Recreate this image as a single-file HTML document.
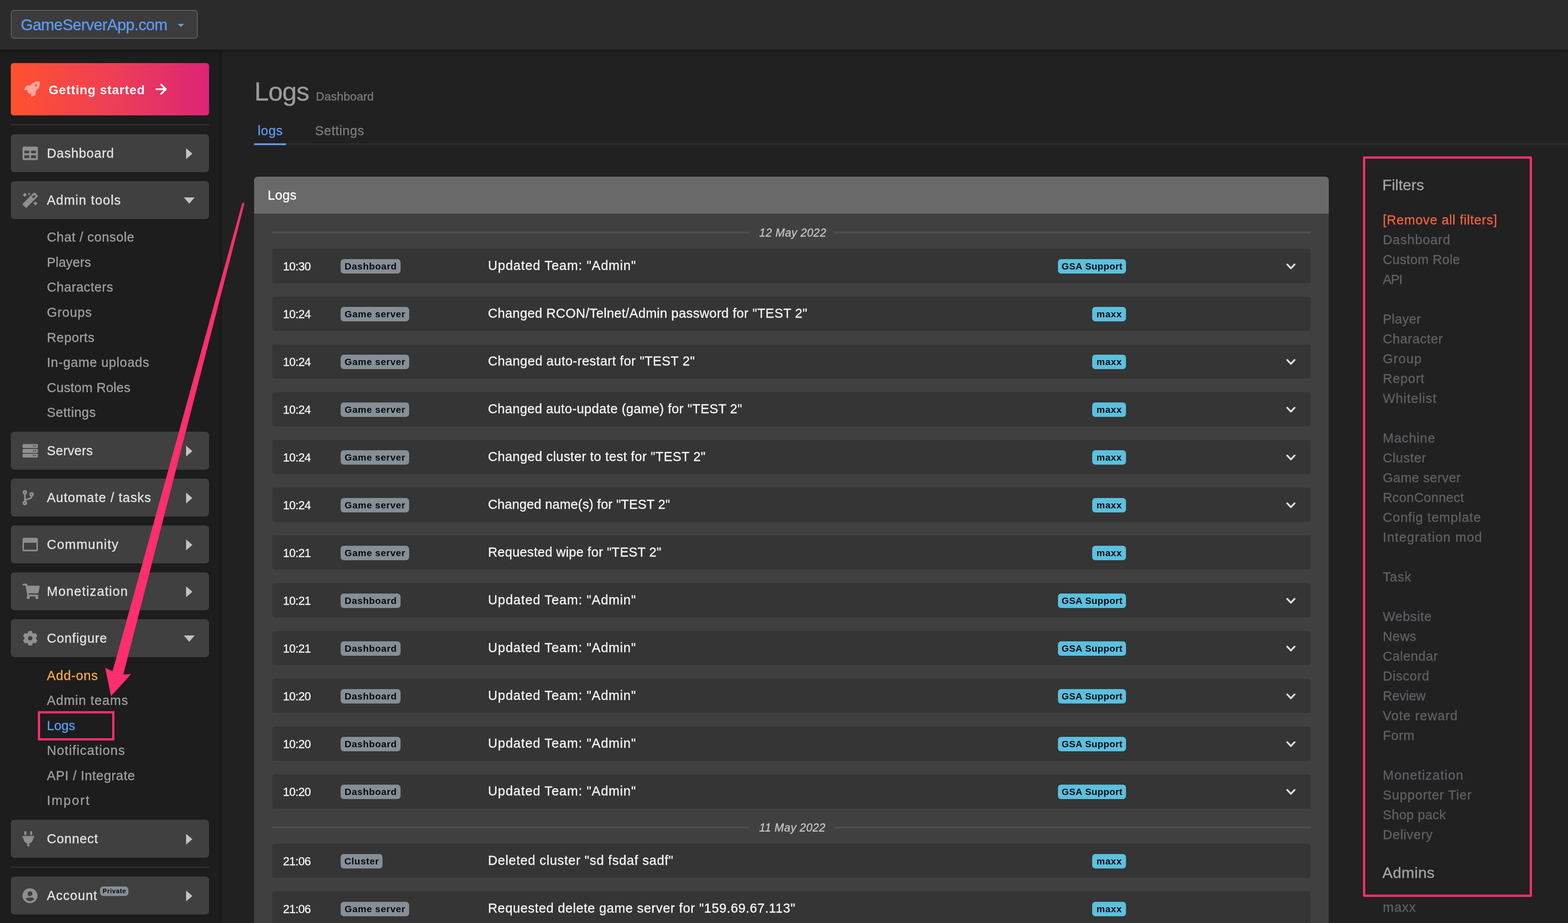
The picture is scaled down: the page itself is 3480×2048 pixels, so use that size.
<!DOCTYPE html><html lang="en"><head><meta charset="utf-8"><title>Logs - Dashboard</title><style>
*{box-sizing:border-box;margin:0;padding:0}
html,body{width:3480px;height:2048px;overflow:hidden;background:#212121}
body{font-family:"Liberation Sans",sans-serif;position:relative;color:#e0e0e0;-webkit-text-stroke:.4px}
.bd,.nostroke{-webkit-text-stroke:0}
#app{position:absolute;left:0;top:0;width:3480px;height:2048px;will-change:transform}
.abs{position:absolute}
.t{position:absolute;white-space:pre;line-height:1}
#topbar{left:0;top:0;width:3480px;height:110px;background:#2b2b2b;box-shadow:0 2px 8px rgba(0,0,0,.45);z-index:3}
#site{left:24px;top:22px;width:415px;height:64px;border:2px solid #5e5e5e;border-radius:8px;background:#3c3c3c}
#sidebar{left:0;top:110px;width:493px;height:1938px;background:#1d1d1d;z-index:1;box-shadow:inset -5px 0 5px -3px rgba(0,0,0,.2)}
#gs{left:24px;top:140px;width:440px;height:116px;border-radius:6px;background:linear-gradient(90deg,#ff512f 0%,#ef3f55 50%,#dd2476 100%);z-index:2}
.sep{position:absolute;left:24px;width:440px;height:2px;background:#383838;z-index:2}
.nb{position:absolute;left:24px;width:440px;height:84px;border-radius:8px;background:#404040;z-index:2}
.nb .t{left:80px;top:28px;font-size:29px;color:#e2e2e2}
.nb svg{position:absolute}
.sub{position:absolute;left:104px;font-size:29px;line-height:1;white-space:pre;color:#9f9f9f;z-index:2}
#panelh{left:564px;top:392px;width:2385px;height:82px;background:#696969;border-radius:8px 8px 0 0}
#panelb{left:564px;top:474px;width:2385px;height:1574px;background:#404040}
.row{position:absolute;left:604px;width:2305px;height:76px;border-radius:6px;background:#353535}
.row .tm{position:absolute;left:24px;top:26px;font-size:26px;letter-spacing:-.7px;line-height:1;color:#f2f2f2;white-space:pre}
.bd{position:absolute;top:23px;height:32px;border-radius:7px;font-weight:700;font-size:21px;line-height:32px;color:#06090c;letter-spacing:.7px;text-indent:.7px;text-align:center;white-space:pre}
.bd.g{left:152px;background:#868e96}
.bd.b{background:#5bc0de}
.row .msg{position:absolute;left:479px;top:23px;font-size:29px;line-height:1;color:#f4f4f4;white-space:pre}
.row svg{position:absolute;left:2249px;top:32px}
.dl{position:absolute;height:4px;background:#4f4f4f}
.dt{position:absolute;font-style:italic;font-size:25px;line-height:1;color:#c4c4c4;white-space:pre;letter-spacing:.4px}
.f{position:absolute;left:3069px;font-size:29px;line-height:1;white-space:pre;color:#5d6166}
</style></head><body><div id="app"><div id="topbar" class="abs"><div id="site" class="abs"><span class="t" style="left:20px;top:12.5px;font-size:35px;letter-spacing:-0.66px;color:#5c9cf6">GameServerApp.com</span><svg class="abs" style="left:368px;top:29px" width="15" height="7" viewBox="0 0 15 7"><path d="M0 0h15l-7.5 7z" fill="#5b9cf5"/></svg></div></div><div id="sidebar" class="abs"></div><div id="gs" class="abs"><svg class="abs" style="left:26px;top:38px" width="40" height="40" viewBox="0 0 40 40"><path fill-rule="evenodd" fill="#fff" fill-opacity=".5" d="M37.9 3.3C34 2.8 31 2.9 28.4 3.4C26 4 24 5 22.4 6.2L17.1 11.8L9.8 11.9Q8.2 12.5 7 14.3L4 20.7Q3.9 21.8 5 22L11.8 22L10.2 25.6L15.9 30.9L18.7 28.4L18.9 35.7Q19.4 37.2 20.6 37L27.2 33.7Q29 32.4 29.4 30.5L29.8 24L34.5 19.1C36 17 37.2 15 37.7 12.7C38.2 10 38.3 7 37.9 3.3zM31.8 11.6A2.4 2.4 0 1 0 27 11.6A2.4 2.4 0 1 0 31.8 11.6z"/></svg><span class="t" style="left:84px;top:46px;font-size:28px;font-weight:700;color:#fff;-webkit-text-stroke:0;letter-spacing:0.99px">Getting started</span><svg class="abs" style="left:320px;top:44px" width="28" height="28" viewBox="0 0 28 28"><path d="M3 14h21M14 4l10 10-10 10" fill="none" stroke="#fff" stroke-width="4" stroke-linecap="round" stroke-linejoin="round"/></svg></div><div class="sep" style="top:276px"></div><div class="nb" style="top:298px"><svg style="left:0;top:0" width="80" height="84" viewBox="0 0 80 84" fill="#8f8f8f"><path fill-rule="evenodd" d="M29.5 27.2h27a3.5 3.5 0 0 1 3.5 3.5v23a3.5 3.5 0 0 1-3.5 3.5h-27a3.5 3.5 0 0 1-3.5-3.5v-23a3.5 3.5 0 0 1 3.5-3.5zM30.1 36.2h10.7v5.8H30.1zM45.1 36.2h10.7v5.8H45.1zM30.1 46.6h10.7v6.3H30.1zM45.1 46.6h10.7v6.3H45.1z"/></svg><span class="t" style="letter-spacing:0.85px">Dashboard</span><svg style="left:389px;top:31px" width="14" height="24" viewBox="0 0 14 24"><path d="M0 0l14 12L0 24z" fill="#c2c2c2"/></svg></div><div class="nb" style="top:402px"><svg style="left:0;top:0" width="80" height="84" viewBox="0 0 80 84" fill="#8f8f8f"><g transform="translate(26 25)"><g transform="rotate(45 17 17.1)"><path fill-rule="evenodd" d="M13 -1.9h8a2.1 2.1 0 0 1 2.1 2.1v33.8a2.1 2.1 0 0 1-2.1 2.1h-8a2.1 2.1 0 0 1-2.1-2.1V0.2a2.1 2.1 0 0 1 2.1-2.1zM14.8 2.4h4.4v6.9h-4.4z"/></g><path d="M5.2 0.5999999999999996Q6.85 3.95 10.2 5.6Q6.85 7.25 5.2 10.6Q3.55 7.25 0.20000000000000018 5.6Q3.55 3.95 5.2 0.5999999999999996ZM14.7 0.3999999999999999Q15.69 2.41 17.7 3.4Q15.69 4.39 14.7 6.4Q13.71 4.39 11.7 3.4Q13.71 2.41 14.7 0.3999999999999999ZM28.6 19.6Q30.25 22.95 33.6 24.6Q30.25 26.25 28.6 29.6Q26.95 26.25 23.6 24.6Q26.95 22.95 28.6 19.6Z"/></g></svg><span class="t" style="letter-spacing:1.23px">Admin tools</span><svg style="left:384px;top:36px" width="24" height="14" viewBox="0 0 24 14"><path d="M0 0h24L12 14z" fill="#c2c2c2"/></svg></div><div class="sub" style="top:512px;letter-spacing:0.66px">Chat / console</div><div class="sub" style="top:568px;letter-spacing:0.22px">Players</div><div class="sub" style="top:623px;letter-spacing:0.57px">Characters</div><div class="sub" style="top:679px;letter-spacing:0.88px">Groups</div><div class="sub" style="top:735px;letter-spacing:0.66px">Reports</div><div class="sub" style="top:790px;letter-spacing:0.78px">In-game uploads</div><div class="sub" style="top:846px;letter-spacing:0.31px">Custom Roles</div><div class="sub" style="top:901px;letter-spacing:0.53px">Settings</div><div class="nb" style="top:958px"><svg style="left:0;top:0" width="80" height="84" viewBox="0 0 80 84" fill="#8f8f8f"><rect x="26" y="27.2" width="34" height="8.9" rx="2.6"/><rect x="26" y="38" width="34" height="8.9" rx="2.6"/><rect x="26" y="48.7" width="34" height="8.5" rx="2.6"/><g fill="#404040"><circle cx="50.3" cy="31.7" r="1.4"/><circle cx="54.5" cy="31.7" r="1.4"/><circle cx="50.3" cy="42.4" r="1.4"/><circle cx="54.5" cy="42.4" r="1.4"/><circle cx="50.3" cy="53" r="1.4"/><circle cx="54.5" cy="53" r="1.4"/></g></svg><span class="t" style="letter-spacing:0.35px">Servers</span><svg style="left:389px;top:31px" width="14" height="24" viewBox="0 0 14 24"><path d="M0 0l14 12L0 24z" fill="#c2c2c2"/></svg></div><div class="nb" style="top:1062px"><svg style="left:0;top:0" width="80" height="84" viewBox="0 0 80 84" fill="#8f8f8f"><path d="M31.2 30.4V54.1M46.1 35V39.5C46.1 45.5 36 45 31.8 48" fill="none" stroke="#8f8f8f" stroke-width="3.4"/><circle cx="31.2" cy="30.4" r="5"/><circle cx="31.2" cy="54.1" r="5"/><circle cx="46.1" cy="34.9" r="5"/><g fill="#404040"><circle cx="31.2" cy="30.4" r="1.2"/><circle cx="31.2" cy="54.1" r="1.2"/><circle cx="46.1" cy="34.9" r="1.2"/></g></svg><span class="t" style="letter-spacing:1.0px">Automate / tasks</span><svg style="left:389px;top:31px" width="14" height="24" viewBox="0 0 14 24"><path d="M0 0l14 12L0 24z" fill="#c2c2c2"/></svg></div><div class="nb" style="top:1166px"><svg style="left:0;top:0" width="80" height="84" viewBox="0 0 80 84" fill="#8f8f8f"><path fill-rule="evenodd" d="M29.5 27.2h27a3.5 3.5 0 0 1 3.5 3.5v23a3.5 3.5 0 0 1-3.5 3.5h-27a3.5 3.5 0 0 1-3.5-3.5v-23a3.5 3.5 0 0 1 3.5-3.5zM29 38.2h27.9v15.5H29z"/></svg><span class="t" style="letter-spacing:1.48px">Community</span><svg style="left:389px;top:31px" width="14" height="24" viewBox="0 0 14 24"><path d="M0 0l14 12L0 24z" fill="#c2c2c2"/></svg></div><div class="nb" style="top:1270px"><svg style="left:0;top:0" width="80" height="84" viewBox="0 0 80 84" fill="#8f8f8f"><g transform="translate(26 24.9)"><path d="M2.2 2.4H8.6L12.6 26.6H33" fill="none" stroke="#8f8f8f" stroke-width="4" stroke-linecap="round" stroke-linejoin="round"/><path d="M10 4.5L38.2 4.9L35.3 21.6H13.2z"/><circle cx="12.7" cy="30.9" r="3.4"/><circle cx="31.8" cy="30.9" r="3.4"/></g></svg><span class="t" style="letter-spacing:1.37px">Monetization</span><svg style="left:389px;top:31px" width="14" height="24" viewBox="0 0 14 24"><path d="M0 0l14 12L0 24z" fill="#c2c2c2"/></svg></div><div class="nb" style="top:1374px"><svg style="left:0;top:0" width="80" height="84" viewBox="0 0 80 84" fill="#8f8f8f"><path fill-rule="evenodd" stroke="#8f8f8f" stroke-width="0.6" stroke-linejoin="round" d="M38.10 30.49L39.30 26.20L46.70 26.20L47.90 30.49A12.6 12.6 0 0 1 50.60 32.05L54.92 30.95L58.62 37.35L55.50 40.54A12.6 12.6 0 0 1 55.50 43.66L58.62 46.85L54.92 53.25L50.60 52.15A12.6 12.6 0 0 1 47.90 53.71L46.70 58.00L39.30 58.00L38.10 53.71A12.6 12.6 0 0 1 35.40 52.15L31.08 53.25L27.38 46.85L30.50 43.66A12.6 12.6 0 0 1 30.50 40.54L27.38 37.35L31.08 30.95L35.40 32.05A12.6 12.6 0 0 1 38.10 30.49ZM48.20 42.10A5.2 5.2 0 1 0 37.80 42.10A5.2 5.2 0 1 0 48.20 42.10Z"/></svg><span class="t" style="letter-spacing:0.97px">Configure</span><svg style="left:384px;top:36px" width="24" height="14" viewBox="0 0 24 14"><path d="M0 0h24L12 14z" fill="#c2c2c2"/></svg></div><div class="sub" style="top:1485px;letter-spacing:0.83px;color:#f5a742">Add-ons</div><div class="sub" style="top:1540px;letter-spacing:1.08px">Admin teams</div><div class="sub" style="top:1596px;letter-spacing:0.04px;color:#5b9cf5">Logs</div><div class="sub" style="top:1651px;letter-spacing:1.25px">Notifications</div><div class="sub" style="top:1707px;letter-spacing:0.71px">API / Integrate</div><div class="sub" style="top:1762px;letter-spacing:2.4px">Import</div><div class="nb" style="top:1819px"><svg style="left:0;top:0" width="80" height="84" viewBox="0 0 80 84" fill="#8f8f8f"><g transform="translate(25.9 25.1)"><path d="M4.06 8.7V2.4a2.42 2.42 0 0 1 4.84 0V8.7zM17 8.7V2.25a2.25 2.25 0 0 1 4.5 0V8.7z"/><rect x="0" y="10.8" width="25.9" height="3.9"/><path d="M1.8 14.6H23.9C23.9 22 19 27.6 12.9 27.6C6.8 27.6 1.8 22 1.8 14.6z"/><rect x="10.7" y="27" width="4.3" height="7"/></g></svg><span class="t" style="letter-spacing:0.88px">Connect</span><svg style="left:389px;top:31px" width="14" height="24" viewBox="0 0 14 24"><path d="M0 0l14 12L0 24z" fill="#c2c2c2"/></svg></div><div class="sep" style="top:1923px"></div><div class="nb" style="top:1945px"><svg style="left:0;top:0" width="80" height="84" viewBox="0 0 80 84" fill="#8f8f8f"><path fill-rule="evenodd" d="M59.1 42.5A16.6 16.6 0 1 1 25.9 42.5A16.6 16.6 0 1 1 59.1 42.5zM48 37.9A5.5 5.5 0 1 0 37 37.9A5.5 5.5 0 1 0 48 37.9zM33 50.1C35.5 47.5 37 46.6 39 46.6H46C48 46.6 49.5 47.5 52 50.1Q42.5 59.3 33 50.1z"/></svg><span class="t" style="letter-spacing:1.07px">Account</span><span class="abs nostroke" style="left:198px;top:22px;width:63px;height:21px;border-radius:7px;background:#868e96;color:#06090c;font-size:14px;font-weight:700;line-height:21px;text-align:center;letter-spacing:.8px;text-indent:.8px">Private</span><svg style="left:389px;top:31px" width="14" height="24" viewBox="0 0 14 24"><path d="M0 0l14 12L0 24z" fill="#c2c2c2"/></svg></div><div class="abs" style="left:84px;top:1578px;width:170px;height:65px;border:5px solid #ff2e6c;z-index:4"></div><span class="t" style="left:564.5px;top:173.5px;font-size:58px;letter-spacing:-1.2px;color:#9b9b9b">Logs</span><span class="t" style="left:701px;top:201px;font-size:26px;letter-spacing:0.17px;color:#7c7c7c">Dashboard</span><div class="abs" style="left:564px;top:318px;width:2916px;height:3px;background:#2d2d2d"></div><span class="t" style="left:572px;top:276px;font-size:29px;color:#5b9cf5;letter-spacing:0.67px">logs</span><div class="abs" style="left:564px;top:318px;width:71px;height:4px;background:#5b9cf5"></div><span class="t" style="left:699px;top:276px;font-size:29px;letter-spacing:0.60px;color:#7c7c7c">Settings</span><div id="panelh" class="abs"><span class="t" style="left:30px;top:27px;font-size:29px;color:#fff;letter-spacing:.4px">Logs</span></div><div id="panelb" class="abs"></div><div class="dl" style="left:604px;top:514px;width:1058px"></div><div class="dl" style="left:1851px;top:514px;width:1058px"></div><div class="dt" style="left:1685px;top:504px">12 May 2022</div><div class="row" style="top:552px"><span class="tm">10:30</span><span class="bd g" style="width:133px">Dashboard</span><span class="msg" style="letter-spacing:1.05px">Updated Team: &quot;Admin&quot;</span><span class="bd b" style="left:1744px;width:151px;letter-spacing:.4px;text-indent:.4px">GSA Support</span><svg width="24" height="14" viewBox="0 0 24 14"><path d="M3.8 2.7L12 11.3 20.2 2.7" fill="none" stroke="#dedede" stroke-width="3.9" stroke-linecap="round" stroke-linejoin="round"/></svg></div><div class="row" style="top:658px"><span class="tm">10:24</span><span class="bd g" style="width:152px">Game server</span><span class="msg" style="letter-spacing:0.46px">Changed RCON/Telnet/Admin password for &quot;TEST 2&quot;</span><span class="bd b" style="left:1820px;width:75px">maxx</span></div><div class="row" style="top:764px"><span class="tm">10:24</span><span class="bd g" style="width:152px">Game server</span><span class="msg" style="letter-spacing:0.51px">Changed auto-restart for &quot;TEST 2&quot;</span><span class="bd b" style="left:1820px;width:75px">maxx</span><svg width="24" height="14" viewBox="0 0 24 14"><path d="M3.8 2.7L12 11.3 20.2 2.7" fill="none" stroke="#dedede" stroke-width="3.9" stroke-linecap="round" stroke-linejoin="round"/></svg></div><div class="row" style="top:870px"><span class="tm">10:24</span><span class="bd g" style="width:152px">Game server</span><span class="msg" style="letter-spacing:0.4px">Changed auto-update (game) for &quot;TEST 2&quot;</span><span class="bd b" style="left:1820px;width:75px">maxx</span><svg width="24" height="14" viewBox="0 0 24 14"><path d="M3.8 2.7L12 11.3 20.2 2.7" fill="none" stroke="#dedede" stroke-width="3.9" stroke-linecap="round" stroke-linejoin="round"/></svg></div><div class="row" style="top:976px"><span class="tm">10:24</span><span class="bd g" style="width:152px">Game server</span><span class="msg" style="letter-spacing:0.46px">Changed cluster to test for &quot;TEST 2&quot;</span><span class="bd b" style="left:1820px;width:75px">maxx</span><svg width="24" height="14" viewBox="0 0 24 14"><path d="M3.8 2.7L12 11.3 20.2 2.7" fill="none" stroke="#dedede" stroke-width="3.9" stroke-linecap="round" stroke-linejoin="round"/></svg></div><div class="row" style="top:1082px"><span class="tm">10:24</span><span class="bd g" style="width:152px">Game server</span><span class="msg" style="letter-spacing:0.13px">Changed name(s) for &quot;TEST 2&quot;</span><span class="bd b" style="left:1820px;width:75px">maxx</span><svg width="24" height="14" viewBox="0 0 24 14"><path d="M3.8 2.7L12 11.3 20.2 2.7" fill="none" stroke="#dedede" stroke-width="3.9" stroke-linecap="round" stroke-linejoin="round"/></svg></div><div class="row" style="top:1188px"><span class="tm">10:21</span><span class="bd g" style="width:152px">Game server</span><span class="msg" style="letter-spacing:0.32px">Requested wipe for &quot;TEST 2&quot;</span><span class="bd b" style="left:1820px;width:75px">maxx</span></div><div class="row" style="top:1294px"><span class="tm">10:21</span><span class="bd g" style="width:133px">Dashboard</span><span class="msg" style="letter-spacing:1.05px">Updated Team: &quot;Admin&quot;</span><span class="bd b" style="left:1744px;width:151px;letter-spacing:.4px;text-indent:.4px">GSA Support</span><svg width="24" height="14" viewBox="0 0 24 14"><path d="M3.8 2.7L12 11.3 20.2 2.7" fill="none" stroke="#dedede" stroke-width="3.9" stroke-linecap="round" stroke-linejoin="round"/></svg></div><div class="row" style="top:1400px"><span class="tm">10:21</span><span class="bd g" style="width:133px">Dashboard</span><span class="msg" style="letter-spacing:1.05px">Updated Team: &quot;Admin&quot;</span><span class="bd b" style="left:1744px;width:151px;letter-spacing:.4px;text-indent:.4px">GSA Support</span><svg width="24" height="14" viewBox="0 0 24 14"><path d="M3.8 2.7L12 11.3 20.2 2.7" fill="none" stroke="#dedede" stroke-width="3.9" stroke-linecap="round" stroke-linejoin="round"/></svg></div><div class="row" style="top:1506px"><span class="tm">10:20</span><span class="bd g" style="width:133px">Dashboard</span><span class="msg" style="letter-spacing:1.05px">Updated Team: &quot;Admin&quot;</span><span class="bd b" style="left:1744px;width:151px;letter-spacing:.4px;text-indent:.4px">GSA Support</span><svg width="24" height="14" viewBox="0 0 24 14"><path d="M3.8 2.7L12 11.3 20.2 2.7" fill="none" stroke="#dedede" stroke-width="3.9" stroke-linecap="round" stroke-linejoin="round"/></svg></div><div class="row" style="top:1612px"><span class="tm">10:20</span><span class="bd g" style="width:133px">Dashboard</span><span class="msg" style="letter-spacing:1.05px">Updated Team: &quot;Admin&quot;</span><span class="bd b" style="left:1744px;width:151px;letter-spacing:.4px;text-indent:.4px">GSA Support</span><svg width="24" height="14" viewBox="0 0 24 14"><path d="M3.8 2.7L12 11.3 20.2 2.7" fill="none" stroke="#dedede" stroke-width="3.9" stroke-linecap="round" stroke-linejoin="round"/></svg></div><div class="row" style="top:1718px"><span class="tm">10:20</span><span class="bd g" style="width:133px">Dashboard</span><span class="msg" style="letter-spacing:1.05px">Updated Team: &quot;Admin&quot;</span><span class="bd b" style="left:1744px;width:151px;letter-spacing:.4px;text-indent:.4px">GSA Support</span><svg width="24" height="14" viewBox="0 0 24 14"><path d="M3.8 2.7L12 11.3 20.2 2.7" fill="none" stroke="#dedede" stroke-width="3.9" stroke-linecap="round" stroke-linejoin="round"/></svg></div><div class="dl" style="left:604px;top:1834px;width:1058px"></div><div class="dl" style="left:1851px;top:1834px;width:1058px"></div><div class="dt" style="left:1685px;top:1824px">11 May 2022</div><div class="row" style="top:1872px"><span class="tm">21:06</span><span class="bd g" style="width:93px">Cluster</span><span class="msg" style="letter-spacing:0.82px">Deleted cluster &quot;sd fsdaf sadf&quot;</span><span class="bd b" style="left:1820px;width:75px">maxx</span></div><div class="row" style="top:1978px"><span class="tm">21:06</span><span class="bd g" style="width:152px">Game server</span><span class="msg" style="letter-spacing:0.67px">Requested delete game server for &quot;159.69.67.113&quot;</span><span class="bd b" style="left:1820px;width:75px">maxx</span></div><div class="abs" style="left:3025px;top:347px;width:375px;height:1643px;border:5px solid #ff2e6c;border-radius:3px"></div><span class="t" style="left:3068px;top:393px;font-size:34px;color:#a4a4a4">Filters</span><div class="f" style="top:474.0px;letter-spacing:0.79px;color:#f0643c">[Remove all filters]</div><div class="f" style="top:518.0px;letter-spacing:0.93px">Dashboard</div><div class="f" style="top:562.0px;letter-spacing:0.35px">Custom Role</div><div class="f" style="top:606.0px;letter-spacing:-1.52px">API</div><div class="f" style="top:694.0px;letter-spacing:0.42px">Player</div><div class="f" style="top:738.0px;letter-spacing:0.71px">Character</div><div class="f" style="top:782.0px;letter-spacing:1.3px">Group</div><div class="f" style="top:826.0px;letter-spacing:0.97px">Report</div><div class="f" style="top:870.0px;letter-spacing:1.15px">Whitelist</div><div class="f" style="top:958.0px;letter-spacing:1.03px">Machine</div><div class="f" style="top:1002.0px;letter-spacing:0.69px">Cluster</div><div class="f" style="top:1046.0px;letter-spacing:0.51px">Game server</div><div class="f" style="top:1090.0px;letter-spacing:0.43px">RconConnect</div><div class="f" style="top:1134.0px;letter-spacing:1.03px">Config template</div><div class="f" style="top:1178.0px;letter-spacing:1.32px">Integration mod</div><div class="f" style="top:1266.0px;letter-spacing:1.05px">Task</div><div class="f" style="top:1354.0px;letter-spacing:0.66px">Website</div><div class="f" style="top:1398.0px;letter-spacing:0.53px">News</div><div class="f" style="top:1442.0px;letter-spacing:0.6px">Calendar</div><div class="f" style="top:1486.0px;letter-spacing:0.78px">Discord</div><div class="f" style="top:1530.0px;letter-spacing:-0.02px">Review</div><div class="f" style="top:1574.0px;letter-spacing:1.08px">Vote reward</div><div class="f" style="top:1618.0px;letter-spacing:0.78px">Form</div><div class="f" style="top:1706.0px;letter-spacing:1.26px">Monetization</div><div class="f" style="top:1750.0px;letter-spacing:1.02px">Supporter Tier</div><div class="f" style="top:1794.0px;letter-spacing:0.33px">Shop pack</div><div class="f" style="top:1838.0px;letter-spacing:0.78px">Delivery</div><span class="t" style="left:3068px;top:1919px;font-size:34px;color:#a4a4a4;letter-spacing:0.48px">Admins</span><div class="f" style="top:1999px;letter-spacing:1.27px">maxx</div><svg class="abs" style="left:0;top:0;z-index:5" width="3480" height="2048" viewBox="0 0 3480 2048"><path d="M537.4 451.5L249.8 1489.6L233.4 1481.5L246.4 1544.8L290.9 1495.8L273.6 1496.8L542.2 452.7A2.5 2.5 0 0 0 537.4 451.5Z" fill="#ff2e6c"/></svg></div></body></html>
